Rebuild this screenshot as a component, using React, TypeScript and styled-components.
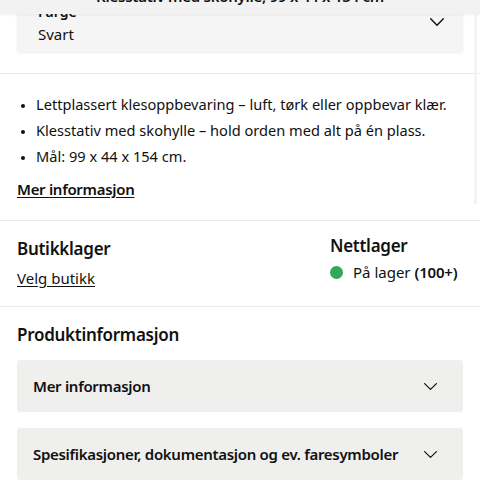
import React from "react";
import styled, { createGlobalStyle } from "styled-components";

const Global = createGlobalStyle`
  html, body { margin: 0; padding: 0; background: #fff; }
  body { font-family: "Noto Sans", "Liberation Sans", sans-serif; color: #111; overflow: hidden; }
  * { box-sizing: border-box; }
`;

const Page = styled.div`
  position: relative;
  width: 480px;
  height: 480px;
  overflow: hidden;
`;

const StickyHeader = styled.div`
  position: absolute;
  top: -16px;
  left: 0;
  right: 0;
  height: 30px;
  background: #f2f2f2;
  box-shadow: 0 1px 2px rgba(0, 0, 0, 0.06);
  display: flex;
  justify-content: center;
  padding-top: 2px;
  font-size: 15px;
  font-weight: 600;
  letter-spacing: -0.25px;
  line-height: 20px;
  z-index: 2;
  white-space: nowrap;
`;

const ScrollTrack = styled.div`
  position: absolute;
  top: 14px;
  left: 474px;
  width: 3px;
  height: 190px;
  background: #f3f3f3;
  z-index: 1;
`;

const Section = styled.section<{ $pt?: number; $pb?: number; $border?: boolean }>`
  padding: ${(p) => p.$pt ?? 0}px 17px ${(p) => p.$pb ?? 0}px 17px;
  border-bottom: ${(p) => (p.$border ? "1px solid #ebebeb" : "none")};
`;

const SelectBox = styled.div`
  width: 446px;
  height: 52px;
  background: #f5f5f5;
  border-radius: 4px;
  box-shadow: 0 1px 2px rgba(0, 0, 0, 0.08);
  padding: 4px 19px 0 21px;
  display: flex;
  align-items: flex-start;
  justify-content: space-between;
`;

const SelectText = styled.div`
  display: flex;
  flex-direction: column;
  gap: 4px;
`;

const SelectLabel = styled.span`
  font-size: 14px;
  font-weight: 600;
  line-height: 16px;
`;

const SelectValue = styled.span`
  font-size: 15px;
  line-height: 20px;
`;

const ChevronWrap = styled.span<{ $mt: number }>`
  display: flex;
  margin-top: ${(p) => p.$mt}px;
`;

const BulletList = styled.ul`
  margin: 0;
  padding: 0 0 0 19px;
  list-style: disc;
  font-size: 14.6px;
  line-height: 26px;
  li::marker { font-size: 12px; }
`;

const TextLink = styled.a<{ $bold?: boolean }>`
  display: inline-block;
  color: #111;
  font-size: 15px;
  line-height: 22px;
  font-weight: ${(p) => (p.$bold ? 600 : 400)};
  letter-spacing: ${(p) => (p.$bold ? "-0.3px" : "0")};
  text-decoration: underline;
  text-underline-offset: 2px;
`;

const MoreRow = styled.div`
  margin-top: 9px;
`;

const StockRow = styled.div`
  display: flex;
  justify-content: space-between;
  padding-right: 1px;
`;

const StockCol = styled.div<{ $pt?: number; $gap: number; $width?: number }>`
  display: flex;
  flex-direction: column;
  align-items: flex-start;
  padding-top: ${(p) => p.$pt ?? 0}px;
  gap: ${(p) => p.$gap}px;
  width: ${(p) => (p.$width ? `${p.$width}px` : "auto")};
`;

const Heading = styled.h2`
  margin: 0;
  font-size: 17px;
  font-weight: 600;
  letter-spacing: -0.28px;
  line-height: 24px;
`;

const Status = styled.div`
  display: flex;
  align-items: center;
  gap: 10px;
  font-size: 15px;
  line-height: 22px;
  b { font-weight: 600; letter-spacing: -0.2px; }
`;

const Dot = styled.span`
  width: 13px;
  height: 13px;
  border-radius: 50%;
  background: #2fa85a;
`;

const AccordionList = styled.div`
  display: flex;
  flex-direction: column;
  gap: 16px;
  margin-top: 13px;
`;

const AccordionItem = styled.div`
  height: 52px;
  background: #efefed;
  border-radius: 3px;
  display: flex;
  align-items: center;
  justify-content: space-between;
  padding: 0 26px 0 16px;
  font-size: 15px;
  font-weight: 600;
  letter-spacing: -0.3px;
`;

const Chevron = ({ w, h, sw }: { w: number; h: number; sw: number }) => (
  <svg width={w} height={h} viewBox={`0 0 ${w} ${h}`} fill="none">
    <path
      d={`M${sw / 2} ${sw / 2} L${w / 2} ${h - sw / 2} L${w - sw / 2} ${sw / 2}`}
      stroke="#111"
      strokeWidth={sw}
      strokeLinecap="round"
      strokeLinejoin="round"
    />
  </svg>
);

export default function App() {
  return (
    <Page>
      <Global />
      <StickyHeader>Klesstativ med skohylle, 99 x 44 x 154 cm</StickyHeader>
      <ScrollTrack />
      <Section $pb={21} $border>
        <SelectBox>
          <SelectText>
            <SelectLabel>Farge</SelectLabel>
            <SelectValue>Svart</SelectValue>
          </SelectText>
          <ChevronWrap $mt={14}>
            <Chevron w={14} h={8} sw={1.4} />
          </ChevronWrap>
        </SelectBox>
      </Section>
      <Section $pt={17} $pb={20} $border>
        <BulletList>
          <li>Lettplassert klesoppbevaring – luft, tørk eller oppbevar klær.</li>
          <li>Klesstativ med skohylle – hold orden med alt på én plass.</li>
          <li>Mål: 99 x 44 x 154 cm.</li>
        </BulletList>
        <MoreRow>
          <TextLink $bold>Mer informasjon</TextLink>
        </MoreRow>
      </Section>
      <Section $pt={13} $pb={17} $border>
        <StockRow>
          <StockCol $pt={3} $gap={6}>
            <Heading>Butikklager</Heading>
            <TextLink>Velg butikk</TextLink>
          </StockCol>
          <StockCol $gap={3} $width={132}>
            <Heading>Nettlager</Heading>
            <Status>
              <Dot />
              <span>
                På lager <b>(100+)</b>
              </span>
            </Status>
          </StockCol>
        </StockRow>
      </Section>
      <Section $pt={16}>
        <Heading>Produktinformasjon</Heading>
        <AccordionList>
          <AccordionItem>
            <span>Mer informasjon</span>
            <Chevron w={13} h={7} sw={1.2} />
          </AccordionItem>
          <AccordionItem>
            <span>Spesifikasjoner, dokumentasjon og ev. faresymboler</span>
            <Chevron w={13} h={7} sw={1.2} />
          </AccordionItem>
        </AccordionList>
      </Section>
    </Page>
  );
}
